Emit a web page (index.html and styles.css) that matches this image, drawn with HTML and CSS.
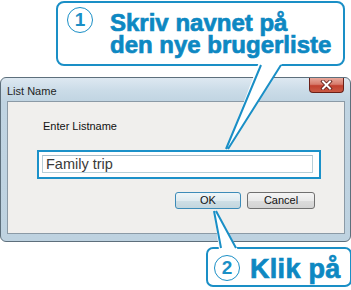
FILE: index.html
```html
<!DOCTYPE html>
<html>
<head>
<meta charset="utf-8">
<link rel="stylesheet" href="styles.css">
</head>
<body>
<div class="page">
  <div class="callout callout-top">
    <span class="num">1</span>
    <div class="callout-text">Skriv navnet på<br>den nye brugerliste</div>
  </div>

  <div class="window">
    <div class="titlebar">
      <span class="title">List Name</span>
      <span class="close">
        <svg width="13" height="10" viewBox="0 0 13 10"><path d="M3 1.5 L10 8.5 M10 1.5 L3 8.5" stroke="#5a1a14" stroke-width="3.6" stroke-linecap="square"/><path d="M3 1.5 L10 8.5 M10 1.5 L3 8.5" stroke="#fff" stroke-width="2" stroke-linecap="square"/></svg>
      </span>
    </div>
    <div class="client">
      <div class="label">Enter Listname</div>
      <div class="field-wrap">
        <div class="field">Family trip</div>
      </div>
      <div class="buttons">
        <span class="btn btn-default">OK</span>
        <span class="btn">Cancel</span>
      </div>
    </div>
  </div>

  <div class="callout callout-bottom">
    <span class="num">2</span>
    <div class="callout-text big">Klik på</div>
  </div>

  <svg class="tails" width="351" height="290" viewBox="0 0 351 290">
    <polygon points="259,62 283,62 228,149 226,149" fill="#fff"/>
    <path d="M261,65 L226,149 M281,65 L228,149" stroke="#1a8fc6" stroke-width="2" fill="none"/>
    <polygon points="214,211 216,211 238,250 219,250" fill="#fff"/>
    <path d="M214,211 L221,248 M216,211 L236,248" stroke="#1a8fc6" stroke-width="2" fill="none"/>
  </svg>
</div>
</body>
</html>
```

FILE: styles.css
```css
html, body {
  margin: 0;
  padding: 0;
  background: #fff;
}
.page {
  position: relative;
  width: 351px;
  height: 290px;
  overflow: hidden;
  font-family: "Liberation Sans", Arial, sans-serif;
}
.callout {
  box-sizing: border-box;
  border: 2px solid #1a8fc6;
  background: #fff;
  display: flex;
  align-items: flex-start;
}
.callout-top {
  margin: 1px 6px 0 56px;
  height: 65px;
  border-radius: 8px;
  padding: 4px 0 0 9px;
  gap: 17px;
}
.num {
  box-sizing: border-box;
  width: 26px;
  height: 26px;
  flex: none;
  border: 1.5px solid #1a8fc6;
  border-radius: 50%;
  color: #1a8fc6;
  font-family: "Liberation Sans", Arial, sans-serif;
  font-weight: 700;
  font-size: 19px;
  line-height: 23px;
  text-align: center;
}
.callout-text {
  font-family: "Liberation Sans", Arial, sans-serif;
  font-weight: 700;
  color: #0d88c2;
  -webkit-text-stroke: 0.7px #0d88c2;
  font-size: 24px;
  line-height: 22px;
  padding-top: 5px;
  white-space: nowrap;
}
.callout-text.big {
  font-size: 27px;
  line-height: 28px;
  letter-spacing: 0.3px;
  padding-top: 0;
}
.window {
  box-sizing: border-box;
  margin-top: 11px;
  height: 165px;
  border: 1px solid #5d6f7c;
  border-radius: 6px;
  background: linear-gradient(to bottom, #dde8f1 0px, #cbdce8 12px, #c0d4e2 24px, #bed2e0 100%);
  display: flex;
  flex-direction: column;
}
.titlebar {
  height: 23px;
  display: flex;
  align-items: flex-start;
  justify-content: space-between;
  padding: 0 6px 0 6px;
}
.title {
  font-size: 11px;
  color: #1e1e1e;
  padding-top: 7px;
}
.close {
  box-sizing: border-box;
  width: 35px;
  height: 15px;
  margin-top: 0;
  border: 1px solid #6b2018;
  border-top: none;
  border-radius: 0 0 4px 4px;
  background: linear-gradient(to bottom, #e9a99c 0%, #d77b6c 45%, #c2402f 55%, #c95a45 100%);
  display: flex;
  align-items: center;
  justify-content: center;
}
.client {
  box-sizing: border-box;
  margin: 0 5px 0 6px;
  height: 133px;
  border: 1px solid #8b9aa6;
  background: #f0efed;
  padding: 17px 0 0 29px;
}
.label {
  font-size: 11px;
  line-height: 14px;
  color: #111;
  padding-left: 6px;
}
.field-wrap {
  box-sizing: border-box;
  margin-top: 17px;
  width: 284px;
  height: 29px;
  border: 2px solid #1b91c9;
  background: #fff;
  padding: 3px 0 0 3px;
}
.field {
  box-sizing: border-box;
  width: 271px;
  height: 18px;
  border: 1px solid #b8cfd8;
  border-top-color: #a9bcc8;
  background: #fff;
  font-size: 14.5px;
  line-height: 16px;
  color: #3a3a3a;
  padding-left: 3px;
}
.buttons {
  display: flex;
  gap: 6px;
  margin: 13px 0 0 138px;
}
.btn {
  box-sizing: border-box;
  width: 68px;
  height: 17px;
  border: 1px solid #707070;
  border-radius: 3px;
  background: linear-gradient(to bottom, #f4f4f4 0%, #eaeaea 50%, #dcdcdc 51%, #d3d3d3 100%);
  font-size: 11px;
  line-height: 15px;
  text-align: center;
  color: #111;
}
.btn-default {
  width: 66px;
  border-color: #3c8bb8;
  background: linear-gradient(to bottom, #eef5f8 0%, #e0ebf0 50%, #cfdfe6 51%, #c3d6de 100%);
}
.callout-bottom {
  margin: 5px 0 0 206px;
  height: 40px;
  width: 146px;
  border-radius: 7px;
  padding: 6px 0 0 6px;
  gap: 10px;
}
.tails {
  position: absolute;
  top: 0;
  left: 0;
  pointer-events: none;
}
```
